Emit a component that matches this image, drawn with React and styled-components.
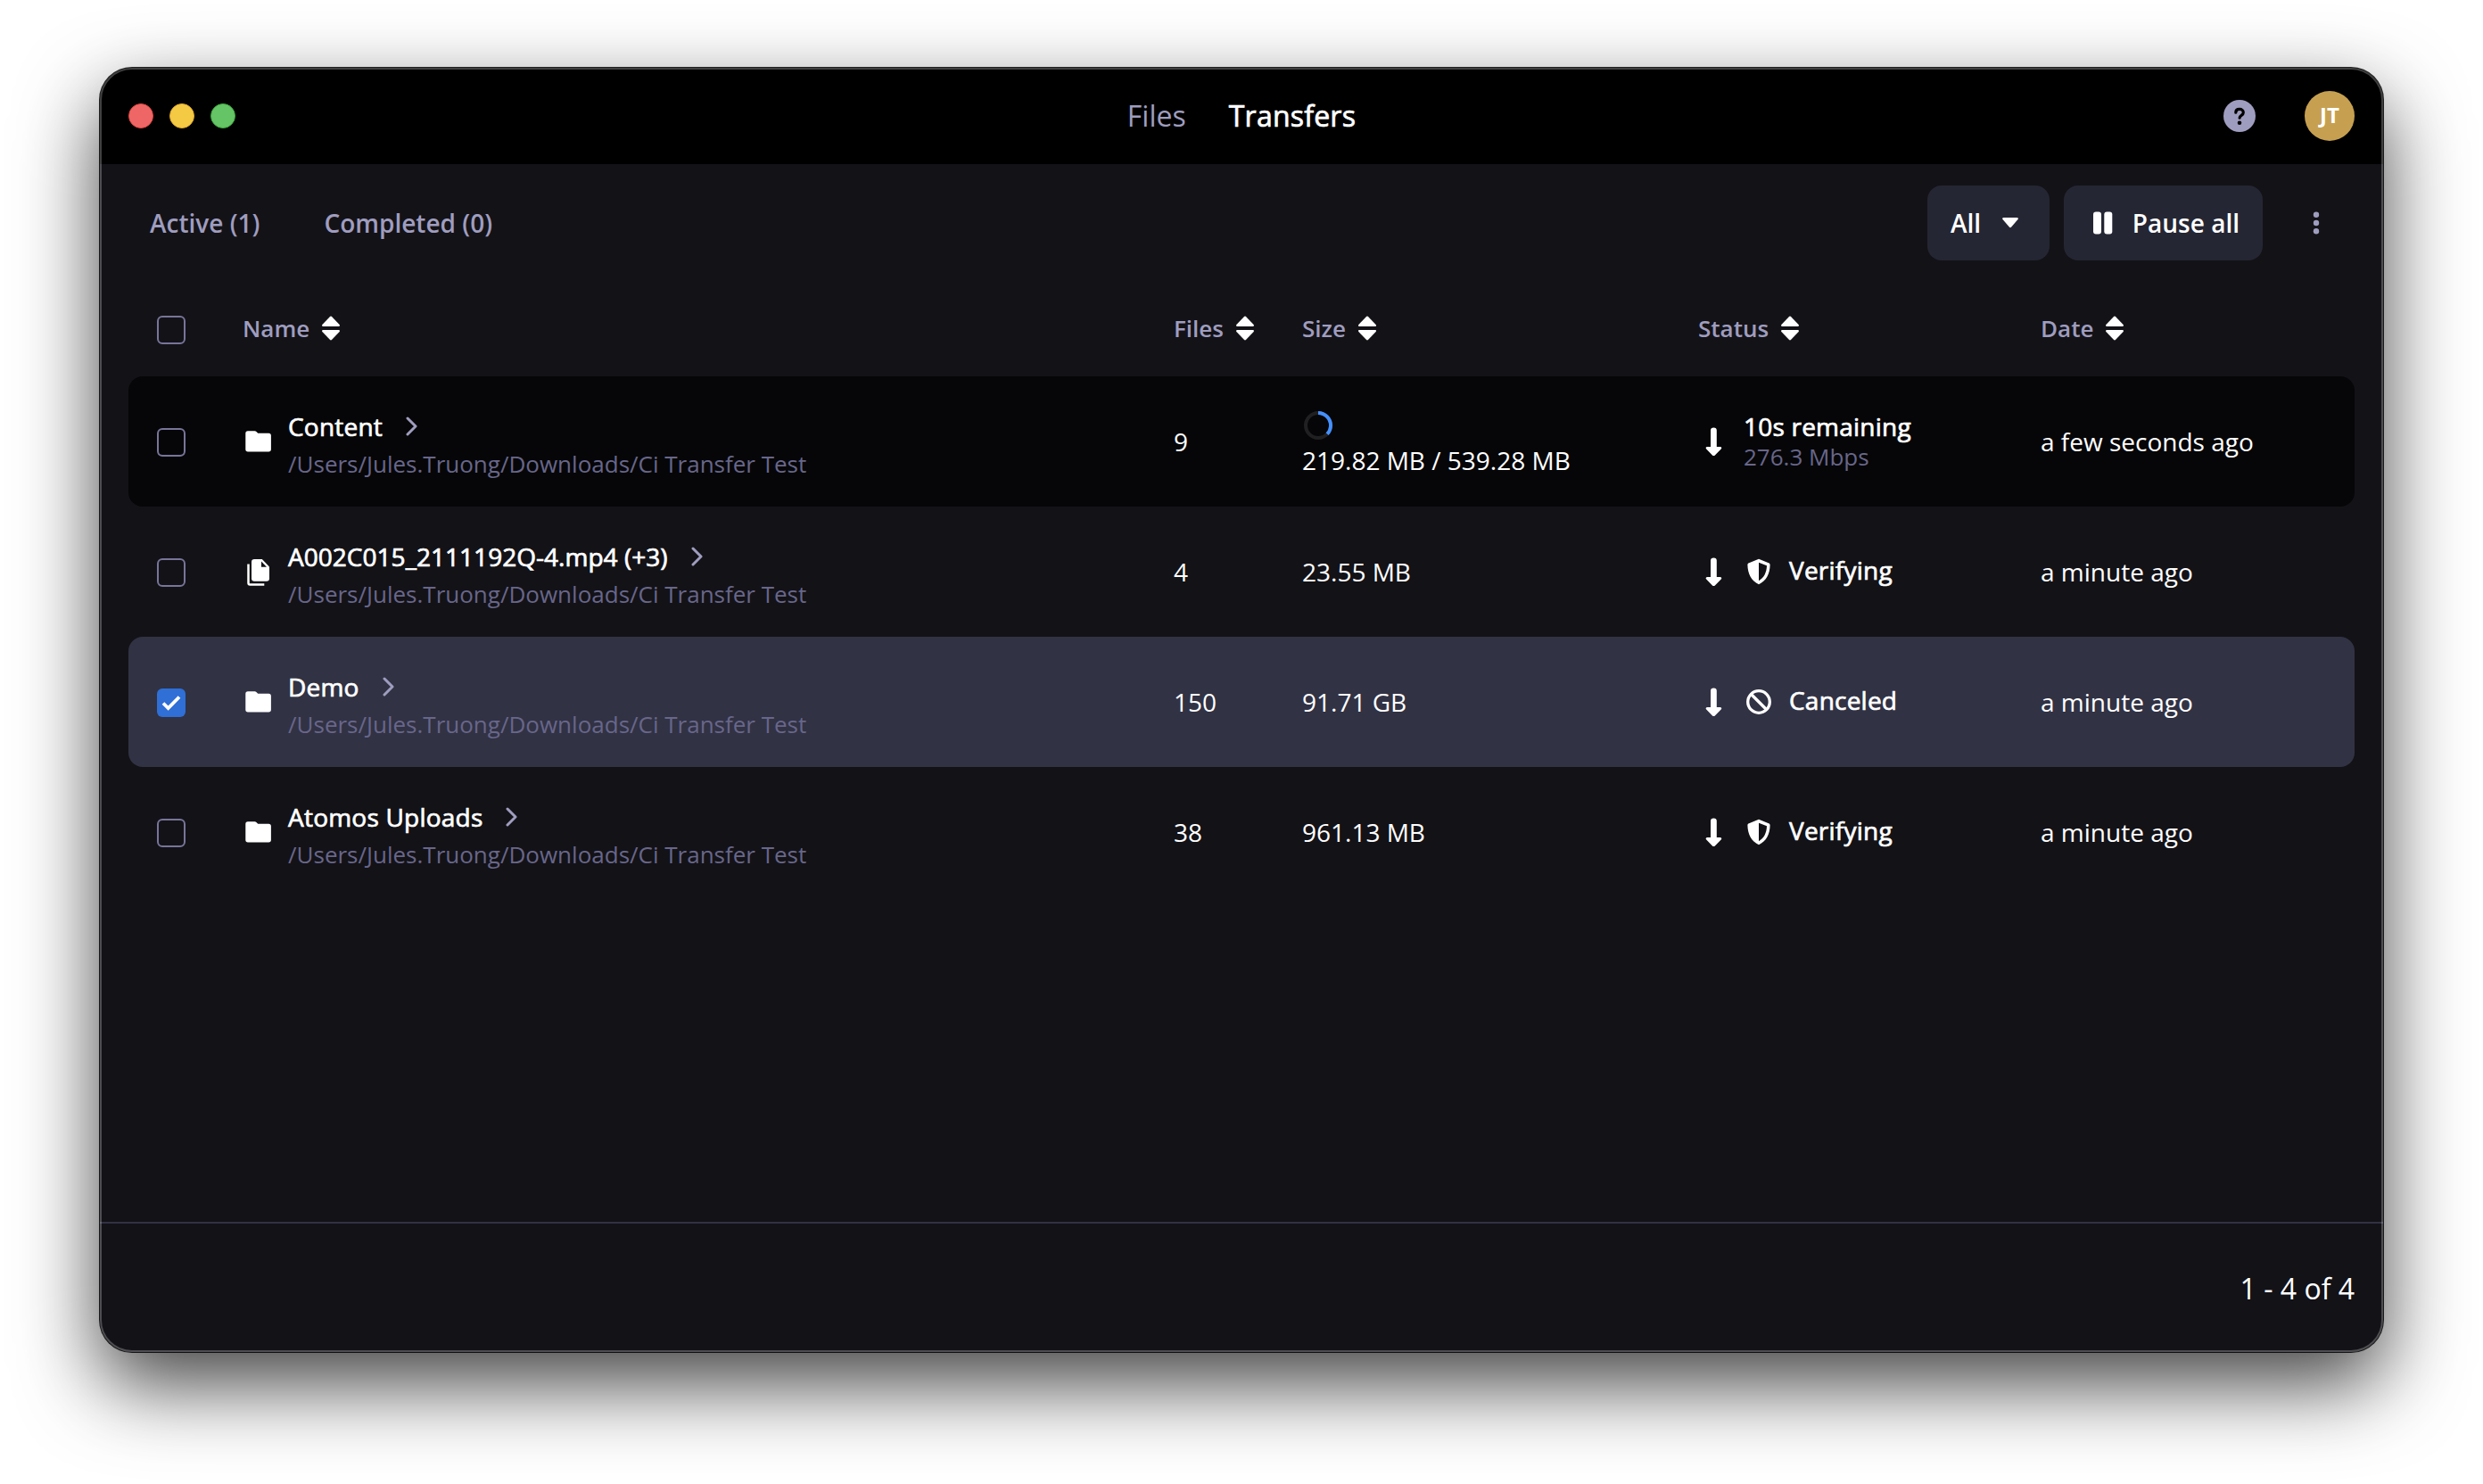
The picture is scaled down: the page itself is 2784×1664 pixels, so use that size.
import styled, { createGlobalStyle, css } from "styled-components";

const colors = {
  black: "#000000",
  surface: "#131217",
  surfaceHover: "#060608",
  selected: "#313244",
  button: "#252633",
  line: "#313244",
  lavender: "#9f9dbf",
  muted: "#68668a",
  outline: "#77759a",
  white: "#ffffff",
  blue: "#2f6fd6",
  progress: "#4590ff",
  gold: "#c6a050",
};

// Open Sans has no medium cut here, so the regular one is thickened a little
const mediumText = css`
  font-weight: 400;
  letter-spacing: 0.22px;
  -webkit-text-stroke: 0.7px currentColor;
`;

const GlobalStyle = createGlobalStyle`
  * {
    box-sizing: border-box;
  }
  body {
    margin: 0;
    background: #ffffff;
    font-family: "Open Sans", "Noto Sans", sans-serif;
    overflow: hidden;
  }
  button {
    font: inherit;
    border: 0;
    padding: 0;
    background: none;
  }
  svg {
    display: block;
    flex: none;
  }
`;

const Desktop = styled.div`
  height: 1664px;
  padding: 76px 112px 148px;
`;

const Window = styled.div`
  position: relative;
  display: flex;
  flex-direction: column;
  height: 1440px;
  border-radius: 36px;
  background: ${colors.surface};
  color: ${colors.white};
  box-shadow: 0 0 0 1px rgba(0, 0, 0, 0.85), 0 36px 90px rgba(0, 0, 0, 0.74);

  /* light rim drawn over the window content */
  &::after {
    content: "";
    position: absolute;
    inset: 0;
    border-radius: inherit;
    border: 2px solid rgba(255, 255, 255, 0.25);
    pointer-events: none;
  }
`;

const TitleBar = styled.header`
  display: grid;
  grid-template-columns: 1fr auto 1fr;
  align-items: center;
  height: 108px;
  padding: 0 32px;
  border-radius: 36px 36px 0 0;
  background: ${colors.black};
`;

const Lights = styled.div`
  display: flex;
  gap: 18px;
`;

const Light = styled.span`
  width: 28px;
  height: 28px;
  border-radius: 50%;
  background: ${({ $fill }) => $fill};
  border: 1px solid ${({ $rim }) => $rim};
`;

const Nav = styled.nav`
  display: flex;
  gap: 48px;
  font-size: 32px;
  line-height: 44px;
`;

const NavItem = styled.a`
  color: ${({ $active }) => ($active ? colors.white : colors.lavender)};
  ${({ $active }) => $active && mediumText}
`;

const Account = styled.div`
  display: flex;
  align-items: center;
  justify-content: flex-end;
  gap: 55px;
`;

const Avatar = styled.div`
  display: flex;
  align-items: center;
  justify-content: center;
  width: 56px;
  height: 56px;
  padding-bottom: 4px;
  border-radius: 50%;
  background: ${colors.gold};
  font-size: 24px;
  font-weight: 700;
`;

const Toolbar = styled.div`
  display: flex;
  align-items: center;
  justify-content: space-between;
  height: 84px;
  margin-top: 24px;
  padding: 0 32px 0 56px;
  font-size: 28px;
  font-weight: 600;
`;

const Filters = styled.div`
  display: flex;
  gap: 72px;
  color: ${colors.lavender};
`;

const Actions = styled.div`
  display: flex;
  align-items: center;
  gap: 16px;
`;

const Button = styled.button`
  display: flex;
  align-items: center;
  height: 84px;
  border-radius: 16px;
  background: ${colors.button};
  color: ${colors.white};
  justify-content: space-between;
`;

const FilterButton = styled(Button)`
  width: 137px;
  padding: 0 34px 0 26px;
`;

const PauseButton = styled(Button)`
  width: 223px;
  padding: 0 26px 0 33px;
`;

const KebabButton = styled.button`
  display: flex;
  justify-content: center;
  width: 87px;
  color: ${colors.lavender};
`;

const Table = styled.div`
  flex: 1;
  padding: 0 32px;
`;

const Columns = styled.div`
  display: grid;
  grid-template-columns: 128px 1044px 144px 444px 384px 1fr;
  align-items: center;
`;

const HeadRow = styled(Columns)`
  height: 130px;
  padding-top: 24px;
`;

const HeadCell = styled.div`
  display: flex;
  align-items: center;
  gap: 13px;
  height: 36px;
  margin-top: -2px;
  color: ${colors.lavender};
  font-size: 26px;
  font-weight: 600;
`;

const Row = styled(Columns)`
  height: 146px;
  border-radius: 16px;
  background: ${({ $state }) =>
    $state === "selected"
      ? colors.selected
      : $state === "hover"
        ? colors.surfaceHover
        : "transparent"};
  font-size: 28px;
  line-height: 38px;
`;

const Check = styled.span`
  display: flex;
  align-items: center;
  justify-content: center;
  width: 32px;
  height: 32px;
  margin: 2px 0 0 32px;
  border-radius: 6px;
  border: ${({ $checked }) => ($checked ? "0" : `2px solid ${colors.outline}`)};
  background: ${({ $checked }) => ($checked ? colors.blue : "transparent")};
`;

const NameCell = styled.div`
  display: flex;
  align-items: center;
  gap: 15px;
`;

const NameText = styled.div`
  padding-top: 7px;
`;

const NameLine = styled.div`
  display: flex;
  align-items: center;
  gap: 26px;
  ${mediumText}
  ${({ $tight }) => $tight && "letter-spacing: 0.03px;"}
`;

const Path = styled.div`
  margin-top: 5px;
  color: ${colors.muted};
  font-size: 26px;
  line-height: 36px;
`;

const SizeCell = styled.div`
  display: flex;
  flex-direction: column;
  gap: 2px;
  padding-top: ${({ $busy }) => ($busy ? 3 : 0)}px;
`;

const StatusCell = styled.div`
  display: flex;
  align-items: center;
  padding-left: 8px;
`;

const StatusText = styled.div`
  display: flex;
  align-items: center;
  gap: 20px;
  margin: -4px 0 0 26px;
  ${mediumText}

  svg {
    margin-top: 4px;
  }
`;

const Remaining = styled.div`
  margin: -1px 0 0 23px;
  line-height: 34px;
`;

const TimeLeft = styled.div`
  ${mediumText}
`;

const Speed = styled.div`
  color: ${colors.muted};
  font-size: 26px;
`;

const Footer = styled.footer`
  display: flex;
  align-items: center;
  justify-content: flex-end;
  height: 146px;
  padding: 0 32px;
  border-top: 2px solid ${colors.line};
  font-size: 32px;
`;

const HelpIcon = () => (
  <svg width="36" height="36" viewBox="0 0 36 36">
    <circle cx="18" cy="18" r="18" fill={colors.lavender} />
    <path
      d="M13.8 14.2c0-2.400 1.800-3.800 4.200-3.800s4.300 1.500 4.300 3.800c0 3.200-4.200 3-4.200 6"
      fill="none"
      stroke="#000"
      strokeWidth="3.200"
      strokeLinecap="round"
    />
    <circle cx="18" cy="25.800" r="2.300" />
  </svg>
);

const SortIcon = () => (
  <svg width="22" height="28" viewBox="0 0 22 28" fill={colors.white}>
    <path d="M9.8 1.2a1.7 1.7 0 0 1 2.4 0L20.6 10c.8.9.4 2-.8 2H2.200c-1.200 0-1.600-1.100-.8-2z" />
    <path d="M9.8 26.800a1.700 1.700 0 0 0 2.400 0L20.600 18c.8-.9.4-2-.8-2H2.200c-1.200 0-1.600 1.100-.8 2z" />
  </svg>
);

const CaretIcon = () => (
  <svg width="20" height="12" viewBox="0 0 20 12" fill={colors.white}>
    <path d="M2.500 0h15c1.300 0 1.800 1.200 1 2.100l-7.300 8.400a1.600 1.600 0 0 1-2.400 0L1.500 2.100C.7 1.200 1.200 0 2.500 0z" />
  </svg>
);

const PauseIcon = () => (
  <svg width="22" height="26" viewBox="0 0 22 26" fill={colors.white}>
    <rect y=".5" width="9" height="25" rx="3" />
    <rect x="12.300" y=".5" width="9" height="25" rx="3" />
  </svg>
);

const KebabIcon = () => (
  <svg width="8" height="26" viewBox="0 0 8 26" fill="currentColor">
    <circle cx="4" cy="3.800" r="3.200" />
    <circle cx="4" cy="13" r="3.200" />
    <circle cx="4" cy="22.200" r="3.200" />
  </svg>
);

const CheckIcon = () => (
  <svg width="22" height="18" viewBox="0 0 22 18">
    <path
      d="M2 9.500 7.600 15 20 2.500"
      fill="none"
      stroke="#fff"
      strokeWidth="3.800"
    />
  </svg>
);

const FolderIcon = () => (
  <svg width="36" height="36" viewBox="0 0 36 36" fill={colors.white}>
    <path d="M6 6.300h7.600c.7 0 1.300.3 1.800.8l1.800 1.700h12a2.700 2.700 0 0 1 2.700 2.700v15.300a2.700 2.700 0 0 1-2.700 2.700H6a2.700 2.700 0 0 1-2.700-2.700V9A2.700 2.700 0 0 1 6 6.300z" />
  </svg>
);

const FilesIcon = () => (
  <svg width="36" height="36" viewBox="0 0 36 36" fill={colors.white}>
    <path d="M13.200 4h8.600l8.200 8.500v13a3.200 3.200 0 0 1-3.200 3.200H13.200a3.200 3.200 0 0 1-3.200-3.200V7.200A3.200 3.200 0 0 1 13.200 4z" />
    <path d="M21 6.500v6.200h6z" fill={colors.surface} />
    <path
      d="M6.500 9.500v21.200c0 1 .8 1.800 1.800 1.800h16"
      fill="none"
      stroke="#fff"
      strokeWidth="2.500"
    />
  </svg>
);

const ChevronIcon = () => (
  <svg width="14" height="22" viewBox="0 0 14 22">
    <path
      d="M2 2l9 9-9 9"
      fill="none"
      stroke={colors.lavender}
      strokeWidth="3"
      strokeLinecap="round"
      strokeLinejoin="round"
    />
  </svg>
);

const ArrowDownIcon = () => (
  <svg width="20" height="34" viewBox="0 0 20 34" fill={colors.white}>
    <path d="M6 4.500a3.400 3 0 0 1 6.800 0V23h3.700c1.800 0 2.300 1.500 1.200 2.500l-6.600 6.700a2.400 2.400 0 0 1-3.400 0L1.200 25.500C.1 24.500.6 23 2.400 23H6z" />
  </svg>
);

const ShieldIcon = () => (
  <svg width="28" height="30" viewBox="0 0 28 30">
    <path
      d="M14 .8 25 5.200c1 .4 1.600 1.100 1.600 2.100C26.500 17 22.500 25.500 14 29.200 5.500 25.500 1.500 17 1.400 7.300c0-1 .6-1.700 1.600-2.100zM14 4.700v20.500c5.800-3 8.800-9.400 9-16.900z"
      fill={colors.white}
      fillRule="evenodd"
    />
  </svg>
);

const BanIcon = () => (
  <svg width="28" height="28" viewBox="0 0 28 28">
    <g fill="none" stroke="#fff" strokeWidth="3.300">
      <circle cx="14" cy="14" r="12.300" />
      <path d="M5.500 5.500l17 17" />
    </g>
  </svg>
);

const ProgressRing = ({ ratio }) => {
  const length = 2 * Math.PI * 14;
  return (
    <svg width="36" height="36" viewBox="0 0 36 36">
      <g fill="none" strokeWidth="4" transform="rotate(-90 18 18)">
        <circle cx="18" cy="18" r="14" stroke="#202022" />
        <circle
          cx="18"
          cy="18"
          r="14"
          stroke={colors.progress}
          strokeDasharray={`${length * ratio} ${length}`}
        />
      </g>
    </svg>
  );
};

const headings = ["Name", "Files", "Size", "Status", "Date"];

const PATH = "/Users/Jules.Truong/Downloads/Ci Transfer Test";

const transfers = [
  {
    name: "Content",
    files: 9,
    size: "219.82 MB / 539.28 MB",
    progress: 0.37,
    remaining: "10s remaining",
    speed: "276.3 Mbps",
    date: "a few seconds ago",
    state: "hover",
  },
  {
    name: "A002C015_2111192Q-4.mp4 (+3)",
    multiple: true,
    files: 4,
    size: "23.55 MB",
    status: "Verifying",
    date: "a minute ago",
  },
  {
    name: "Demo",
    files: 150,
    size: "91.71 GB",
    status: "Canceled",
    date: "a minute ago",
    state: "selected",
  },
  {
    name: "Atomos Uploads",
    files: 38,
    size: "961.13 MB",
    status: "Verifying",
    date: "a minute ago",
  },
];

const TransferRow = ({ item }) => {
  const checked = item.state === "selected";
  return (
    <Row $state={item.state}>
      <Check $checked={checked}>{checked && <CheckIcon />}</Check>
      <NameCell>
        {item.multiple ? <FilesIcon /> : <FolderIcon />}
        <NameText>
          <NameLine $tight={item.multiple}>
            {item.name}
            <ChevronIcon />
          </NameLine>
          <Path>{PATH}</Path>
        </NameText>
      </NameCell>
      <div>{item.files}</div>
      <SizeCell $busy={Boolean(item.progress)}>
        {item.progress && <ProgressRing ratio={item.progress} />}
        {item.size}
      </SizeCell>
      <StatusCell>
        <ArrowDownIcon />
        {item.remaining ? (
          <Remaining>
            <TimeLeft>{item.remaining}</TimeLeft>
            <Speed>{item.speed}</Speed>
          </Remaining>
        ) : (
          <StatusText>
            {item.status === "Canceled" ? <BanIcon /> : <ShieldIcon />}
            {item.status}
          </StatusText>
        )}
      </StatusCell>
      <div>{item.date}</div>
    </Row>
  );
};

const App = () => {
  return (
    <>
      <GlobalStyle />
      <Desktop>
        <Window>
          <TitleBar>
            <Lights>
              <Light $fill="#ee6766" $rim="#e2463f" />
              <Light $fill="#f4c944" $rim="#e0a92a" />
              <Light $fill="#65c466" $rim="#3aa83c" />
            </Lights>
            <Nav>
              <NavItem>Files</NavItem>
              <NavItem $active>Transfers</NavItem>
            </Nav>
            <Account>
              <HelpIcon />
              <Avatar>JT</Avatar>
            </Account>
          </TitleBar>
          <Toolbar>
            <Filters>
              <span>Active (1)</span>
              <span>Completed (0)</span>
            </Filters>
            <Actions>
              <FilterButton>
                All
                <CaretIcon />
              </FilterButton>
              <PauseButton>
                <PauseIcon />
                Pause all
              </PauseButton>
              <KebabButton>
                <KebabIcon />
              </KebabButton>
            </Actions>
          </Toolbar>
          <Table>
            <HeadRow>
              <Check />
              {headings.map((heading) => (
                <HeadCell key={heading}>
                  {heading}
                  <SortIcon />
                </HeadCell>
              ))}
            </HeadRow>
            {transfers.map((item) => (
              <TransferRow key={item.name} item={item} />
            ))}
          </Table>
          <Footer>1 - 4 of 4</Footer>
        </Window>
      </Desktop>
    </>
  );
};

export default App;
